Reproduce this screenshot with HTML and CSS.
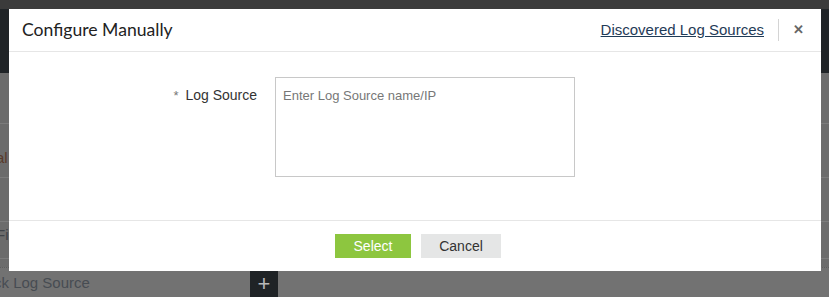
FILE: index.html
```html
<!DOCTYPE html>
<html>
<head>
<meta charset="utf-8">
<link rel="stylesheet" href="styles.css">
</head>

<body>

<div class="app">
  <div class="app_top"></div>
  <div class="app_header"></div>
  <div class="app_row"></div>
  <div class="app_row row_tall"><span class="app_text orange">al</span></div>
  <div class="app_row row_mid"></div>
  <div class="app_row row_short"><span class="app_text">Fi</span></div>
  <div class="app_row row_tiny"></div>
  <div class="app_bar">
    <span class="app_text bar_text">ck Log Source</span>
    <span class="plus_box">+</span>
  </div>
</div>

<div class="modal">
  <div class="modal_head">
    <span class="modal_title">Configure Manually</span>
    <a class="head_link" href="#">Discovered Log Sources</a>
    <span class="head_sep"></span>
    <span class="head_close">&#x2715;</span>
  </div>

  <div class="modal_body">
    <div class="form_row">
      <label class="form_label"><span class="req">*</span> Log Source</label>
      <textarea class="form_box" placeholder="Enter Log Source name/IP"></textarea>
    </div>
  </div>

  <div class="modal_foot">
    <button class="btn btn_select">Select</button>
    <button class="btn btn_cancel">Cancel</button>
  </div>
</div>

</body>
</html>
```

FILE: styles.css
```css
body {
  margin: 0;
  width: 829px;
  height: 297px;
  overflow: hidden;
  position: relative;
  font-family: "Liberation Sans", Arial, sans-serif;
}

/* page behind the dialog, already dimmed */
.app {
  height: 297px;
  background-color: #6c6c6c;
  display: flex;
  flex-direction: column;
}

.app_top {
  height: 9px;
  background-color: #3b3b3b;
}

.app_header {
  height: 65px;
  background-color: #202427;
}

.app_row {
  height: 51px;
  border-bottom: 1px solid #7c7c7c;
  display: flex;
  align-items: center;
  box-sizing: border-box;
}

.row_tall { height: 54px; padding-top: 14px; }
.row_mid { height: 45px; }
.row_short { height: 37px; padding-bottom: 12px; }
.row_tiny { height: 8px; border-bottom: none; }

.app_text {
  font-size: 15px;
  color: #3e4247;
  margin-left: -4px;
}

.orange {
  color: #5a3a2a;
}

.app_bar {
  flex: 1;
  display: flex;
  align-items: center;
  background-color: #727272;
  border-top: 1px dotted #5e5e5e;
}

.bar_text {
  display: inline-block;
  width: 256px;
  font-size: 15px;
  color: #474c52;
  margin-left: -6px;
}

.plus_box {
  width: 28px;
  align-self: stretch;
  background-color: #1f2326;
  color: #b9b9b9;
  font-size: 22px;
  display: flex;
  align-items: center;
  justify-content: center;
  padding-top: 3px;
}

/* dialog */
.modal {
  position: absolute;
  top: 9px;
  left: 9px;
  width: 812px;
  height: 262px;
  background-color: #fff;
  display: flex;
  flex-direction: column;
}

.modal_head {
  height: 42px;
  border-bottom: 1px solid #e6e6e6;
  display: flex;
  align-items: center;
  padding: 0 17px 0 13px;
}

.modal_title {
  font-family: Lato, "Open Sans", sans-serif;
  font-size: 17.6px;
  color: #222;
  flex: 1;
  margin-top: -2px;
}

.head_link {
  font-size: 15px;
  color: #1f3b57;
  text-decoration: underline;
  margin-top: -1px;
}

.head_sep {
  width: 1px;
  height: 22px;
  background-color: #d4d4d4;
  margin: 0 14px 0 14px;
}

.head_close {
  font-size: 13px;
  color: #666;
  font-weight: bold;
  margin-top: -2px;
}

.modal_body {
  height: 168px;
  border-bottom: 1px solid #e6e6e6;
}

.form_row {
  display: flex;
  padding-top: 25px;
}

.form_label {
  width: 248px;
  text-align: right;
  padding-top: 10px;
  padding-right: 18px;
  font-size: 14px;
  color: #333;
}

.req {
  color: #777;
  font-size: 13px;
  margin-right: 3px;
}

.form_box {
  width: 300px;
  height: 100px;
  box-sizing: border-box;
  border: 1px solid #c8c8c8;
  padding: 10px 7px;
  margin: 0;
  font-family: "Liberation Sans", Arial, sans-serif;
  font-size: 13px;
  resize: none;
  outline: none;
}

.form_box::placeholder {
  color: #777;
}

.modal_foot {
  flex: 1;
  display: flex;
  align-items: center;
  justify-content: center;
  gap: 10px;
  padding-left: 6px;
  padding-bottom: 1px;
}

.btn {
  height: 24px;
  border: none;
  border-radius: 0;
  font-family: "Liberation Sans", Arial, sans-serif;
  font-size: 14px;
  padding: 0;
  cursor: pointer;
}

.btn_select {
  width: 76px;
  background-color: #8dc63f;
  color: #fff;
}

.btn_cancel {
  width: 80px;
  background-color: #e5e6e6;
  color: #333;
}
```
